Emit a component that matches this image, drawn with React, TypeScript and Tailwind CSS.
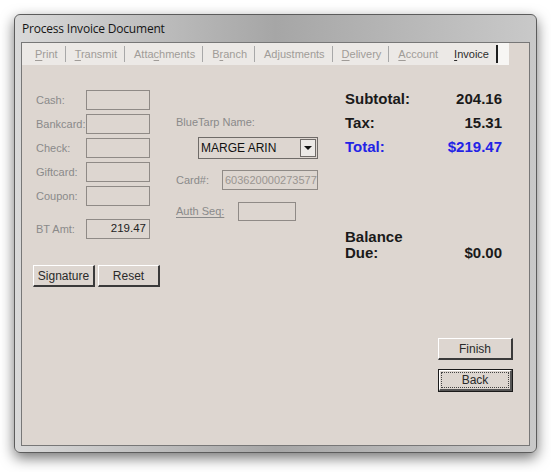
import React from "react";

const labelFont = { fontFamily: '"Liberation Sans", Arial, sans-serif' };

function U({ children }: { children: React.ReactNode }) {
  return <span className="underline underline-offset-2">{children}</span>;
}

function Sep() {
  return <div className="ml-[7px] mr-[9px] h-[16px] w-px bg-[#a8a8a8]" />;
}

function Field({ label, value, right }: { label: string; value?: string; right?: boolean }) {
  return (
    <div className="flex h-[20px] items-center">
      <span className="w-[50px] shrink-0 whitespace-nowrap text-[11px] text-[#8a8a8a]">{label}</span>
      <div
        className={`flex h-[20px] w-[64px] items-center border border-[#8f8a86] px-[3px] text-[11.5px] text-[#222] ${
          right ? "justify-end" : ""
        }`}
      >
        {value}
      </div>
    </div>
  );
}

function Btn({ children, def }: { children: React.ReactNode; def?: boolean }) {
  if (def) {
    return (
      <div className="h-[23px] w-[75px] border border-[#1a1a1a]">
        <div className="flex h-full w-full items-center justify-center border-t border-l border-t-white border-l-white border-r-2 border-b-2 border-r-[#555] border-b-[#555] bg-[#ddd6d0] p-[1px]">
          <div className="flex h-full w-full items-center justify-center border border-dotted border-[#444] text-[12px] text-[#2a2a2a]">
            {children}
          </div>
        </div>
      </div>
    );
  }
  return (
    <div className="flex h-[22px] items-center justify-center border-t border-l border-t-white border-l-white border-r-2 border-b-2 border-r-[#3a3a3a] border-b-[#3a3a3a] bg-[#ddd6d0] text-[12px] text-[#2a2a2a]">
      {children}
    </div>
  );
}

export default function App() {
  return (
    <div className="h-[472px] w-[551px] overflow-hidden bg-white pl-[14px] pt-[14px]" style={labelFont}>
      {/* Window frame */}
      <div className="flex h-[439px] w-[523px] flex-col rounded-[6px] border border-[#5c5c5c] bg-gradient-to-r from-[#d9d9d9] via-[#a6a6a6] to-[#c9c9c9] px-[6px] pb-[6px] shadow-[0_5px_14px_rgba(0,0,0,0.55)]">
        {/* Title bar */}
        <div
          className="flex h-[27px] shrink-0 items-center pl-[1px] pt-[1px] text-[12px] tracking-[-0.2px] text-[#151515]"
          style={{ fontFamily: '"Open Sans", "Noto Sans", sans-serif' }}
        >
          Process Invoice Document
        </div>

        {/* Client area */}
        <div className="flex flex-1 flex-col border border-[#777] bg-[#ddd6d0]">
          {/* Tab strip */}
          <div className="flex h-[22px] shrink-0">
            <div className="flex items-center bg-[#ece9e6] pl-[13px] text-[11px] text-[#a09c98]">
              <span>
                <U>P</U>rint
              </span>
              <Sep />
              <span>
                <U>T</U>ransmit
              </span>
              <Sep />
              <span>
                Atta<U>c</U>hments
              </span>
              <Sep />
              <span>
                B<U>r</U>anch
              </span>
              <Sep />
              <span>
                Ad<U>j</U>ustments
              </span>
              <Sep />
              <span>
                <U>D</U>elivery
              </span>
              <Sep />
              <span>
                <U>A</U>ccount
              </span>
              <span className="ml-[16px] mr-[7px] text-[#2c2c2c]">
                <U>I</U>nvoice
              </span>
              <div className="h-[18px] w-[2px] bg-[#1e1e1e]" />
              <div className="h-full w-[11px] bg-[#f7f6f4]" />
            </div>
          </div>

          {/* Content */}
          <div className="flex pl-[11px]">
            {/* Left column */}
            <div className="flex w-[143px] flex-col pt-[25px]">
              <div className="flex flex-col gap-[4px] pl-[3px]">
                <Field label="Cash:" />
                <Field label="Bankcard:" />
                <Field label="Check:" />
                <Field label="Giftcard:" />
                <Field label="Coupon:" />
              </div>
              <div className="mt-[13px] pl-[3px]">
                <Field label="BT Amt:" value="219.47" right />
              </div>
              <div className="mt-[26px] flex gap-[3px]">
                <div className="w-[62px]">
                  <Btn>Signature</Btn>
                </div>
                <div className="w-[62px]">
                  <Btn>Reset</Btn>
                </div>
              </div>
            </div>

            {/* Middle column */}
            <div className="flex w-[169px] flex-col pt-[50px]">
              <div className="text-[11px] leading-[15px] text-[#8a8a8a]">BlueTarp Name:</div>
              <div className="ml-[22px] mt-[7px] flex h-[22px] w-[120px] items-center border border-[#6f6b68] bg-[#ddd6d0]">
                <span className="flex-1 pl-[2px] text-[12px] text-[#111]">MARGE ARIN</span>
                <div className="mr-[1px] flex h-[18px] w-[16px] items-center justify-center border border-[#6f6b68] bg-[#ece9e6]">
                  <div className="h-0 w-0 border-x-[4px] border-t-[4px] border-x-transparent border-t-[#111]" />
                </div>
              </div>
              <div className="mt-[11px] flex h-[20px] items-center">
                <span className="w-[46px] text-[11px] text-[#8a8a8a]">Card#:</span>
                <div className="flex h-[20px] w-[96px] items-center overflow-hidden whitespace-nowrap border border-[#8f8a86] pl-[2px] text-[11px] text-[#9a9590]">
                  603620000273577
                </div>
              </div>
              <div className="mt-[12px] flex h-[19px] items-center">
                <span className="w-[62px] text-[11px] text-[#8a8a8a] underline underline-offset-2">Auth Seq:</span>
                <div className="h-[19px] w-[58px] border border-[#8f8a86]" />
              </div>
            </div>

            {/* Right column */}
            <div className="flex w-[168px] flex-col pt-[25px]">
              <div className="flex w-[157px] flex-col text-[15px] font-bold">
                <div className="flex h-[24px] items-center justify-between pb-[6px] text-[#1a1a1a]">
                  <span>Subtotal:</span>
                  <span>204.16</span>
                </div>
                <div className="flex h-[24px] items-center justify-between pb-[6px] text-[#1a1a1a]">
                  <span>Tax:</span>
                  <span>15.31</span>
                </div>
                <div className="flex h-[24px] items-center justify-between pb-[6px] text-[#2323e6]">
                  <span>Total:</span>
                  <span>$219.47</span>
                </div>
                <div className="mt-[67px] flex items-end justify-between leading-[16px] text-[#1a1a1a]">
                  <span>
                    Balance
                    <br />
                    Due:
                  </span>
                  <span>$0.00</span>
                </div>
              </div>
              <div className="mt-[77px] flex flex-col items-end gap-[9px]">
                <div className="w-[75px]">
                  <Btn>Finish</Btn>
                </div>
                <Btn def>Back</Btn>
              </div>
            </div>
          </div>
        </div>
      </div>
    </div>
  );
}
